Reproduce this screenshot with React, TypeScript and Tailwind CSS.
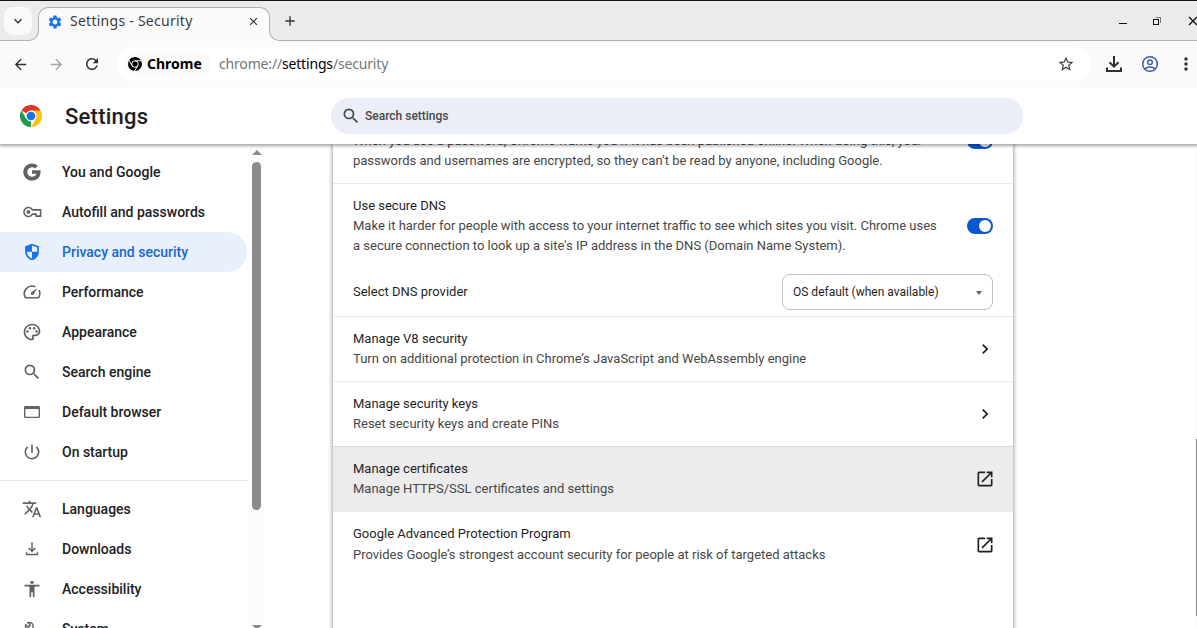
import React from "react";
import {
  MdSearch, MdPowerSettingsNew, MdTranslate, MdAccessibility, MdArrowBack, MdArrowForward,
  MdRefresh, MdStarBorder, MdMoreVert, MdSettings, MdClose, MdAdd, MdKeyboardArrowDown,
  MdChevronRight, MdOutlinePalette, MdOutlineBuild,
} from "react-icons/md";

const Svg = ({ children, size = 20, className = "" }: { children: React.ReactNode; size?: number; className?: string }) => (
  <svg viewBox="0 0 24 24" width={size} height={size} fill="currentColor" className={`shrink-0 ${className}`}>{children}</svg>
);

const GoogleG = () => (
  <Svg><path d="M12 9.800v4.400h5.400c-.7 2.200-2.700 3.500-5.400 3.500a5.700 5.700 0 1 1 3.700-10l3.200-3.200A10.300 10.300 0 1 0 12 22.300c6 0 10.300-4.200 10.300-10.200 0-.8-.1-1.600-.2-2.300z" /></Svg>
);
const Key = () => (
  <svg viewBox="0 0 24 24" width="22" height="22" fill="currentColor" className="-mx-px shrink-0"><g fill="none" stroke="currentColor" strokeWidth="1.700"><path d="M12.400 9.700a4.900 4.900 0 1 0 0 4.600H16.500v2.200h4.900V9.700z" /></g><circle cx="8" cy="12" r="2.100" /></svg>
);
const Shield = () => (
  <Svg><path d="M12 2 3.700 5.200v6.100c0 5.200 3.500 9.300 8.300 10.700 4.800-1.400 8.300-5.500 8.300-10.700V5.200zM12 4.200v7.600h6.300c-.4 3.900-2.800 6.900-6.300 8.100v-8.100H5.700V6.600z" transform="matrix(-1 0 0 1 24 0)" /></Svg>
);
const Gauge = () => (
  <Svg><path fill="none" stroke="currentColor" strokeWidth="1.900" d="M16 5.800A9.200 9.200 0 0 0 4.200 18.900H19.800A9.300 9.300 0 0 0 20.500 9.800" /><path d="m18.300 7.400-4.700 7.800c-1 1.200-3.300.2-3-1.700 0-.5.300-.8.600-1.100z" /></Svg>
);
const Browser = () => (
  <Svg><path d="M4.200 4.800h15.600c1.100 0 1.800.8 1.800 1.800v10.800c0 1-.7 1.800-1.800 1.800H4.200c-1.100 0-1.800-.8-1.800-1.800V6.600c0-1 .7-1.800 1.800-1.800zM4.100 8.400v9.200h15.800V8.400z" /></Svg>
);
const Download = () => (
  <Svg><path fill="none" stroke="currentColor" strokeWidth="1.800" d="M12 4v10.500M8 10.700l4 4 4-4M5.400 15.800v2.900h13.200v-2.900" /></Svg>
);
const OpenNew = () => (
  <Svg><path d="M19 19H5V5h7V3H5c-1.100 0-2 .9-2 2v14c0 1.100.9 2 2 2h14c1.100 0 2-.9 2-2v-7h-2zM14 3v2h3.590l-9.830 9.830 1.410 1.410L19 6.410V10h2V3z" /></Svg>
);
const ChromeMono = () => (
  <svg viewBox="0 0 24 24" width="14" height="14">
    <circle cx="12" cy="12" r="12" />
    <g fill="none" stroke="#fafafa" strokeWidth="1.700"><circle cx="12" cy="12" r="5.600" /><path d="M12 6.400H23M7.150 14.800 1.600 5.200M16.850 14.800 11.300 24" /></g>
  </svg>
);
const ChromeLogo = () => (
  <svg viewBox="0 0 48 48" width="22" height="22">
    <path fill="#dc3626" d="M24 24 3.200 12a24 24 0 0 1 41.600 0z" />
    <path fill="#21994a" d="M24 24 24 48A24 24 0 0 1 3.200 12L13.600 30z" />
    <path fill="#ffc117" d="M24 12h20.800A24 24 0 0 1 24 48l10.400-18z" />
    <path fill="#dc3626" d="M3.200 12h41.600H24z" />
    <circle cx="24" cy="24" r="12" fill="#fff" /><circle cx="24" cy="24" r="9.500" fill="#1a73e8" />
  </svg>
);

const primary = [
  { label: "You and Google", icon: <GoogleG /> },
  { label: "Autofill and passwords", icon: <Key /> },
  { label: "Privacy and security", icon: <Shield />, active: true },
  { label: "Performance", icon: <Gauge /> },
  { label: "Appearance", icon: <MdOutlinePalette size={20} /> },
  { label: "Search engine", icon: <MdSearch size={20} /> },
  { label: "Default browser", icon: <Browser /> },
  { label: "On startup", icon: <MdPowerSettingsNew size={20} /> },
];
const secondary = [
  { label: "Languages", icon: <MdTranslate size={20} /> },
  { label: "Downloads", icon: <Download /> },
  { label: "Accessibility", icon: <MdAccessibility size={20} /> },
  { label: "System", icon: <MdOutlineBuild size={17} /> },
];

function NavItem({ label, icon, active }: { label: string; icon: React.ReactNode; active?: boolean }) {
  return (
    <a className={`flex h-10 w-[247px] shrink-0 items-center rounded-r-full pl-[22px] text-[14px] font-medium ${active ? "bg-[#e8f0fe] text-[#1967d2]" : "text-[#202124]"}`}>
      <span className={`flex w-5 justify-center ${active ? "text-[#1a73e8]" : "text-[#5f6368]"}`}>{icon}</span>
      <span className="ml-5 whitespace-nowrap">{label}</span>
    </a>
  );
}

const Toggle = () => (
  <span className="flex h-4 w-[26px] shrink-0 items-center justify-end rounded-full bg-[#0b57d0] pr-0.5">
    <span className="size-3 rounded-full bg-white" />
  </span>
);

function Row({ title, desc, icon, className, titleClass = "" }: { title: string; desc: string; icon: React.ReactNode; className: string; titleClass?: string }) {
  return (
    <div className={`flex shrink-0 items-center justify-between border-t pr-[18px] pl-5 ${className}`}>
      <div>
        <div className={`text-[#1f1f1f] ${titleClass}`}>{title}</div>
        <div className="text-[#474747]">{desc}</div>
      </div>
      <span className="text-[#1f1f1f]">{icon}</span>
    </div>
  );
}

export default function App() {
  return (
    <div className="flex h-[628px] w-[1197px] flex-col overflow-hidden bg-white font-['Roboto',sans-serif]">
      <div className="flex h-[41px] shrink-0 items-start border-t border-[#17121a] bg-[#ebebeb]">
        <div className="flex h-10 w-[28px] items-start border-b border-[#b0b0b0] pt-1.5 pl-1">
          <button className="z-10 flex size-7 shrink-0 items-center justify-center rounded-[9px] bg-[#fafafa] text-[#303030]"><MdKeyboardArrowDown size={16} /></button>
        </div>
        <div className="z-[1] flex h-3 w-[11px] self-end bg-[#fafafa]">
          <span className="h-3 w-[11px] rounded-br-[10px] border-r border-b border-[#b0b0b0] bg-[#ebebeb]" />
        </div>
        <div className="-ml-px flex h-[34px] w-[232px] items-center self-end rounded-t-[10px] border-x border-t border-[#b0b0b0] bg-[#fafafa] px-2 pb-[6px]">
          <MdSettings size={16} className="shrink-0 text-[#1a73e8]" />
          <span className="-mt-0.5 ml-[7px] font-['Noto_Sans',sans-serif] text-[14px] leading-5 tracking-[0.26px] whitespace-nowrap text-[#3c3c3c]">Settings - Security</span>
          <MdClose size={13} className="mr-px ml-auto text-[#303030]" />
        </div>
        <div className="z-[1] -ml-px flex h-3 w-[11px] self-end bg-[#fafafa]">
          <span className="h-3 w-[11px] rounded-bl-[10px] border-b border-l border-[#b0b0b0] bg-[#ebebeb]" />
        </div>
        <div className="flex h-10 flex-1 items-center border-b border-[#b0b0b0]">
          <MdAdd size={16} className="ml-[2px] text-[#303030]" />
          <svg width="80" height="16" viewBox="0 0 80 16" className="ml-auto shrink-0" fill="none" stroke="#111" shapeRendering="crispEdges">
            <path d="M2 10.500h8" />
            <path d="M36.500 6.500h5v5h-5z" />
            <path d="M38.500 4.500h5v5" stroke="#777" />
            <path d="m72 4 8 8m0-8-8 8" shapeRendering="auto" strokeWidth="1.400" />
          </svg>
        </div>
      </div>

      <div className="flex h-[47px] shrink-0 items-center bg-[#fafafa]">
        <MdArrowBack size={17} className="-mt-px ml-3 text-[#303030]" />
        <MdArrowForward size={17} className="-mt-px ml-[19px] text-[#a5a5a5]" />
        <MdRefresh size={18} className="-mt-px ml-[18px] text-[#303030]" />
        <div className="-mt-px ml-[17px] flex h-[34px] w-[972px] items-center rounded-full bg-white pr-[15px] pl-1.5">
          <div className="flex h-6 w-[87px] shrink-0 items-center rounded-full bg-[#fafafa] pl-1 font-['Noto_Sans',sans-serif] text-[14px] font-bold">
            <ChromeMono /><span className="-mt-0.5 ml-[5px]">Chrome</span>
          </div>
          <span className="-mt-0.5 ml-2 font-['Noto_Sans',sans-serif] text-[14px] tracking-[-0.17px] whitespace-nowrap text-[#757575]">chrome://<span className="text-black">settings</span>/security</span>
          <MdStarBorder size={18} className="ml-auto text-[#404040]" />
        </div>
        <span className="-mt-px ml-[14px] text-[#303030]"><svg width="20" height="20" viewBox="0 0 20 20" fill="none" stroke="currentColor" strokeWidth="2"><path d="M10 2v10.500M5.500 8.200 10 12.700l4.500-4.500M3 13.500V17h14v-3.500" /></svg></span>
        <svg className="-mt-px ml-4 text-[#3f5aa6]" width="20" height="20" viewBox="0 0 20 20" fill="none" stroke="currentColor" strokeWidth="1.500"><circle cx="10" cy="10" r="7.300" /><circle cx="10" cy="8.300" r="2.300" /><path d="M4.800 15c2.500-2.700 7.900-2.700 10.400 0" /></svg>
        <MdMoreVert size={20} className="-mt-px ml-4 shrink-0 text-[#303030]" />
      </div>

      <header className="z-10 flex h-14 shrink-0 items-center bg-white shadow-[0_1px_3px_1px_rgba(0,0,0,0.35)] [clip-path:inset(0_0_-8px_0)]">
        <div className="ml-5"><ChromeLogo /></div>
        <h1 className="ml-[23px] w-[266px] text-[22px] font-medium tracking-[0.25px] text-[#202124]">Settings</h1>
        <div className="flex h-9 w-[692px] items-center rounded-full bg-[#ebeef7] pl-[10px]">
          <MdSearch size={20} className="text-[#474747]" />
          <span className="ml-1 text-[12px] font-medium text-[#474747]">Search settings</span>
        </div>
      </header>

      <div className="flex min-h-0 flex-1">
        <nav className="flex w-[249px] shrink-0 flex-col overflow-hidden pt-2">
          {primary.map((i) => <NavItem key={i.label} {...i} />)}
          <div className="mt-2 mb-2 h-px shrink-0 bg-[#e8e8e8]" />
          {secondary.map((i) => <NavItem key={i.label} {...i} />)}
        </nav>
        <div className="flex w-[15px] shrink-0 flex-col items-center bg-[#fcfcfc] pt-[6px]">
          <span className="h-0 w-0 shrink-0 border-x-[5px] border-b-[5px] border-x-transparent border-b-[#8b8b8b]" />
          <span className="mt-[7px] h-[348px] w-[9px] shrink-0 rounded-full bg-[#8b8b8b]" />
          <span className="mt-[115px] h-0 w-0 shrink-0 border-x-[5px] border-t-[5px] border-x-transparent border-t-[#8b8b8b]" />
        </div>
        <main className="flex min-w-0 flex-1 overflow-hidden pl-[69px]">
          <section className="flex h-[600px] w-[680px] shrink-0 flex-col bg-white text-[13px] leading-5 shadow-[0_1px_4px_1px_rgba(0,0,0,0.35)]">
            <div className="-mt-[14px] flex h-[53px] shrink-0 justify-between px-5 pt-px">
              <p className="w-[590px] whitespace-nowrap text-[#474747]">When you use a password, Chrome warns you if it has been published online. When doing this, your<br />passwords and usernames are encrypted, so they can’t be read by anyone, including Google.</p>
              <div className="pt-0.5"><Toggle /></div>
            </div>
            <div className="flex h-[84px] shrink-0 items-center justify-between border-t border-[#ebebeb] px-5">
              <div className="whitespace-nowrap text-[#474747]">
                <div className="text-[#1f1f1f]">Use secure DNS</div>
                <p>Make it harder for people with access to your internet traffic to see which sites you visit. Chrome uses<br />a secure connection to look up a site's IP address in the DNS (Domain Name System).</p>
              </div>
              <Toggle />
            </div>
            <div className="flex h-[49px] shrink-0 items-center justify-between px-5 text-[#1f1f1f]">
              <span>Select DNS provider</span>
              <button className="flex h-9 w-[211px] items-center justify-between rounded-lg border border-[#c0c0c0] px-[10px] text-[12px]">
                OS default (when available)
                <span className="mt-0.5 h-0 w-0 border-x-[3.5px] border-t-4 border-x-transparent border-t-[#5f6368]" />
              </button>
            </div>
            <Row className="h-[65px] border-[#ebebeb]" title="Manage V8 security" desc="Turn on additional protection in Chrome’s JavaScript and WebAssembly engine" icon={<MdChevronRight size={20} />} />
            <Row className="h-[65px] border-[#ebebeb]" title="Manage security keys" desc="Reset security keys and create PINs" icon={<MdChevronRight size={20} />} />
            <Row className="h-[65px] border-[#dadada] bg-[#ececec]" title="Manage certificates" desc="Manage HTTPS/SSL certificates and settings" icon={<OpenNew />} />
            <Row className="h-[66px] border-[#ebebeb]" titleClass="-mt-px pb-px" title="Google Advanced Protection Program" desc="Provides Google’s strongest account security for people at risk of targeted attacks" icon={<OpenNew />} />
          </section>
          <div className="ml-auto flex w-[3px] flex-col items-end bg-[#fcfcfc] pt-[295px]"><span className="h-[177px] w-px bg-[#8b8b8b]" /></div>
        </main>
      </div>
    </div>
  );
}
